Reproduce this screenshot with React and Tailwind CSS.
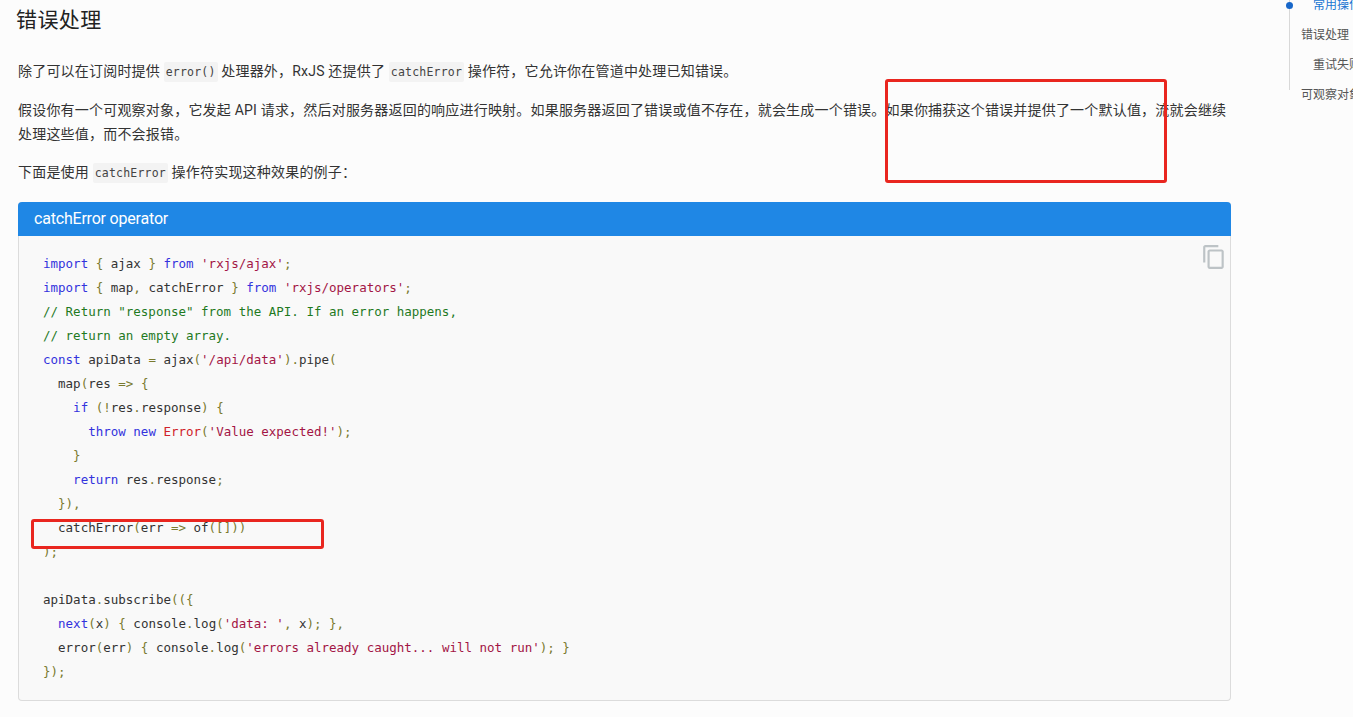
const cjk = "font-['Roboto','Noto_Sans_CJK_SC','Noto_Sans_CJK_SC',sans-serif]";

const K = ({ children }) => <span className="text-[#3333dd]">{children}</span>;
const S = ({ children }) => <span className="text-[#a31545]">{children}</span>;
const P = ({ children }) => <span className="text-[#7a7a2e]">{children}</span>;
const C = ({ children }) => <span className="text-[#1f7a1f]">{children}</span>;
const R = ({ children }) => <span className="text-[#d0222a]">{children}</span>;

const Code = ({ children }) => (
  <code className="font-['DejaVu_Sans_Mono',monospace] text-[11.5px] text-[#444] bg-[#f3f3f3] rounded-[2px] px-[2px] py-[3px]">
    {children}
  </code>
);

const lines = [
  <><K>import</K> <P>{"{"}</P> ajax <P>{"}"}</P> <K>from</K> <S>'rxjs/ajax'</S><P>;</P></>,
  <><K>import</K> <P>{"{"}</P> map<P>,</P> catchError <P>{"}"}</P> <K>from</K> <S>'rxjs/operators'</S><P>;</P></>,
  <C>{'// Return "response" from the API. If an error happens,'}</C>,
  <C>// return an empty array.</C>,
  <><K>const</K> apiData <P>=</P> ajax<P>(</P><S>'/api/data'</S><P>).</P>pipe<P>(</P></>,
  <>  map<P>(</P>res <P>{"=>"}</P> <P>{"{"}</P></>,
  <>    <K>if</K> <P>(!</P>res<P>.</P>response<P>)</P> <P>{"{"}</P></>,
  <>      <K>throw</K> <K>new</K> <R>Error</R><P>(</P><S>'Value expected!'</S><P>);</P></>,
  <>    <P>{"}"}</P></>,
  <>    <K>return</K> res<P>.</P>response<P>;</P></>,
  <>  <P>{"}),"}</P></>,
  <>  catchError<P>(</P>err <P>{"=>"}</P> of<P>([]))</P></>,
  <P>);</P>,
  <>{" "}</>,
  <>apiData<P>.</P>subscribe<P>({"({"}</P></>,
  <>  <K>next</K><P>(</P>x<P>)</P> <P>{"{"}</P> console<P>.</P>log<P>(</P><S>'data: '</S><P>,</P> x<P>);</P> <P>{"},"}</P></>,
  <>  error<P>(</P>err<P>)</P> <P>{"{"}</P> console<P>.</P>log<P>(</P><S>'errors already caught... will not run'</S><P>);</P> <P>{"}"}</P></>,
  <P>{"});"}</P>,
];

export default function App() {
  return (
    <div className={`relative w-[1353px] h-[717px] overflow-hidden bg-[#fcfcfc] flex ${cjk} text-[#333]`}>
      <main className="w-[1231px] shrink-0 pl-[18px]">
        <h1 className="text-[21px] leading-[28px] font-normal text-[#222] -ml-[2px] mt-[6px] tracking-[0.4px]">错误处理</h1>
        <p className="mt-[25px] text-[14px] leading-[24px] tracking-[0.2px]">
          除了可以在订阅时提供 <Code>error()</Code> 处理器外，RxJS 还提供了 <Code>catchError</Code> 操作符，它允许你在管道中处理已知错误。
        </p>
        <p className="mt-[14px] text-[14px] leading-[24px] tracking-[0.2px]">
          假设你有一个可观察对象，它发起 API 请求，然后对服务器返回的响应进行映射。如果服务器返回了错误或值不存在，就会生成一个错误。如果你捕获这个错误并提供了一个默认值，流就会继续处理这些值，而不会报错。
        </p>
        <p className="mt-[14px] text-[14px] leading-[24px] tracking-[0.2px]">
          下面是使用 <Code>catchError</Code> 操作符实现这种效果的例子：
        </p>
        <section className="mt-[17px] rounded-[4px] border border-[#dcdcdc] border-t-0 bg-[#f9f9f9]">
          <header className="h-[34px] rounded-t-[4px] bg-[#1f87e5] text-white text-[16px] leading-[34px] pl-[16px] -mx-px tracking-[-0.2px] font-['Roboto',sans-serif]">
            catchError operator
          </header>
          <div className="relative pt-[16px] pb-[16px] pl-[24px] h-[464px]">
            <pre className="font-['DejaVu_Sans_Mono',monospace] text-[12.5px] leading-[24px] text-[#333]">
              {lines.map((l, i) => <div key={i} className="h-[24px]">{l}</div>)}
            </pre>
            <svg className="absolute right-[3px] top-[8px] text-[#bdc3c6]" width="26" height="26" viewBox="0 0 24 24" fill="currentColor">
              <path d="M16 1H4c-1.1 0-2 .9-2 2v14h2V3h12V1zm3 4H8c-1.1 0-2 .9-2 2v14c0 1.1.9 2 2 2h11c1.1 0 2-.9 2-2V7c0-1.1-.9-2-2-2zm0 16H8V7h11v14z" />
            </svg>
          </div>
        </section>
      </main>

      <nav className="relative ml-[58px] w-[64px] h-[100px] border-l border-[#d8d8d8] text-[12px] leading-[30px] text-[#555] whitespace-nowrap -mt-[10px] pt-0">
        <span className="absolute -left-[4px] top-[12px] w-[7px] h-[7px] rounded-full bg-[#1867c9]" />
        <div className="pl-[23px] text-[#1976d2]">常用操作</div>
        <div className="pl-[11px]">错误处理</div>
        <div className="pl-[23px]">重试失败</div>
        <div className="pl-[11px]">可观察对象</div>
      </nav>

      <div className="absolute left-[885px] top-[79px] w-[282px] h-[104px] border-[3px] border-[#e9261f] rounded-[3px]" />
      <div className="absolute left-[31px] top-[519px] w-[293px] h-[30px] border-[3px] border-[#e9261f] rounded-[3px]" />
    </div>
  );
}
